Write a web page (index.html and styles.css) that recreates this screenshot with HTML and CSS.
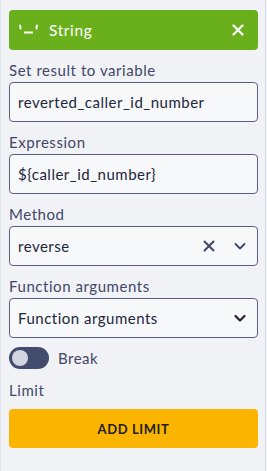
FILE: index.html
```html
<!DOCTYPE html>
<html>
<head>
<meta charset="utf-8">
<link rel="stylesheet" href="styles.css">
</head>
<body>
<div class="panel">
  <div class="header">
    <svg class="hicon" width="22" height="14" viewBox="0 0 22 14"><path d="M2 2.5L2.6 5.5" stroke="#fff" stroke-width="2" stroke-linecap="round"/><path d="M6 9.5H15" stroke="#fff" stroke-width="2"/><path d="M19 2.5L18.4 5.5" stroke="#fff" stroke-width="2" stroke-linecap="round"/></svg>
    <span class="htitle">String</span>
    <svg class="hclose" width="12" height="12" viewBox="0 0 12 12"><path d="M1.5 1.5L10.5 10.5M10.5 1.5L1.5 10.5" stroke="#fff" stroke-width="2.2" stroke-linecap="round"/></svg>
  </div>
  <div class="field">
    <div class="label">Set result to variable</div>
    <div class="input">reverted_caller_id_number</div>
  </div>
  <div class="field">
    <div class="label">Expression</div>
    <div class="input">${caller_id_number}</div>
  </div>
  <div class="field">
    <div class="label">Method</div>
    <div class="input select">
      <span class="val">reverse</span>
      <svg class="clear" width="12" height="12" viewBox="0 0 12 12"><path d="M1.5 1.5L10.5 10.5M10.5 1.5L1.5 10.5" stroke="#3f4766" stroke-width="2" stroke-linecap="round"/></svg>
      <svg class="chev" width="14" height="14" viewBox="0 0 14 14"><path d="M2.5 5L7 9.5L11.5 5" fill="none" stroke="#3f4766" stroke-width="1.8" stroke-linecap="round" stroke-linejoin="round"/></svg>
    </div>
  </div>
  <div class="field">
    <div class="label">Function arguments</div>
    <div class="input select">
      <span class="val">Function arguments</span>
      <svg class="chev" width="14" height="14" viewBox="0 0 14 14"><path d="M2.5 5L7 9.5L11.5 5" fill="none" stroke="#1f2333" stroke-width="2.2" stroke-linecap="round" stroke-linejoin="round"/></svg>
    </div>
  </div>
  <div class="toggle-row">
    <span class="toggle"><span class="knob"></span></span>
    <span class="tlabel">Break</span>
  </div>
  <div class="label limit">Limit</div>
  <div class="btn">ADD LIMIT</div>
</div>
</body>
</html>
```
FILE: styles.css
```css
html, body {
  margin: 0;
  padding: 0;
  background: #f1f2f6;
  height: 100%;
}
body {
  font-family: "Lato", "Open Sans", sans-serif;
  color: #3f4766;
  border-left: 1px solid #dfe1e8;
  border-right: 1px solid #dfe1e8;
  width: 266px;
  box-sizing: border-box;
  height: 471px;
}
.panel {
  padding: 10px 0 0 8px;
  width: 249px;
  display: flex;
  flex-direction: column;
}
.header {
  height: 40px;
  background: #6ab01c;
  border-radius: 4px;
  display: flex;
  align-items: center;
  padding: 0 14px 0 9px;
  color: #fff;
  margin-bottom: 10px;
}
.hicon {
  flex-shrink: 0;
  margin-right: 9px;
}
.htitle {
  font-size: 15.5px;
  flex: 1;
  letter-spacing: 0.6px;
}
.field {
  display: flex;
  flex-direction: column;
  margin-bottom: 10px;
}
.label {
  font-size: 15px;
  line-height: 20px;
  margin-bottom: 2px;
  color: #3f4766;
  letter-spacing: 0.55px;
}
.input {
  height: 40px;
  box-sizing: border-box;
  border: 1px solid #5a6180;
  border-radius: 4px;
  background: #f7f8fa;
  display: flex;
  align-items: center;
  padding: 0 8px;
  font-size: 15px;
  color: #22263a;
  letter-spacing: 0.5px;
}
.select .val {
  flex: 1;
}
.clear {
  margin-right: 18px;
}
.chev {
  margin-right: 2px;
}
.toggle-row {
  display: flex;
  align-items: center;
  margin-top: -1px;
  height: 22px;
}
.toggle {
  width: 40px;
  height: 22px;
  border-radius: 11px;
  background: #434c6e;
  display: flex;
  align-items: center;
  padding-left: 3px;
  box-sizing: border-box;
}
.knob {
  width: 16px;
  height: 16px;
  border-radius: 50%;
  background: #d3d6e0;
}
.tlabel {
  margin-left: 9px;
  font-size: 15px;
  letter-spacing: 0.5px;
  color: #3f4766;
}
.limit {
  margin-top: 11px;
  margin-bottom: 9px;
}
.btn {
  height: 39px;
  background: #fbb500;
  border-radius: 4px;
  display: flex;
  align-items: center;
  justify-content: center;
  font-size: 13px;
  font-weight: 700;
  letter-spacing: 0.6px;
  color: #1d1d1d;
}
```
